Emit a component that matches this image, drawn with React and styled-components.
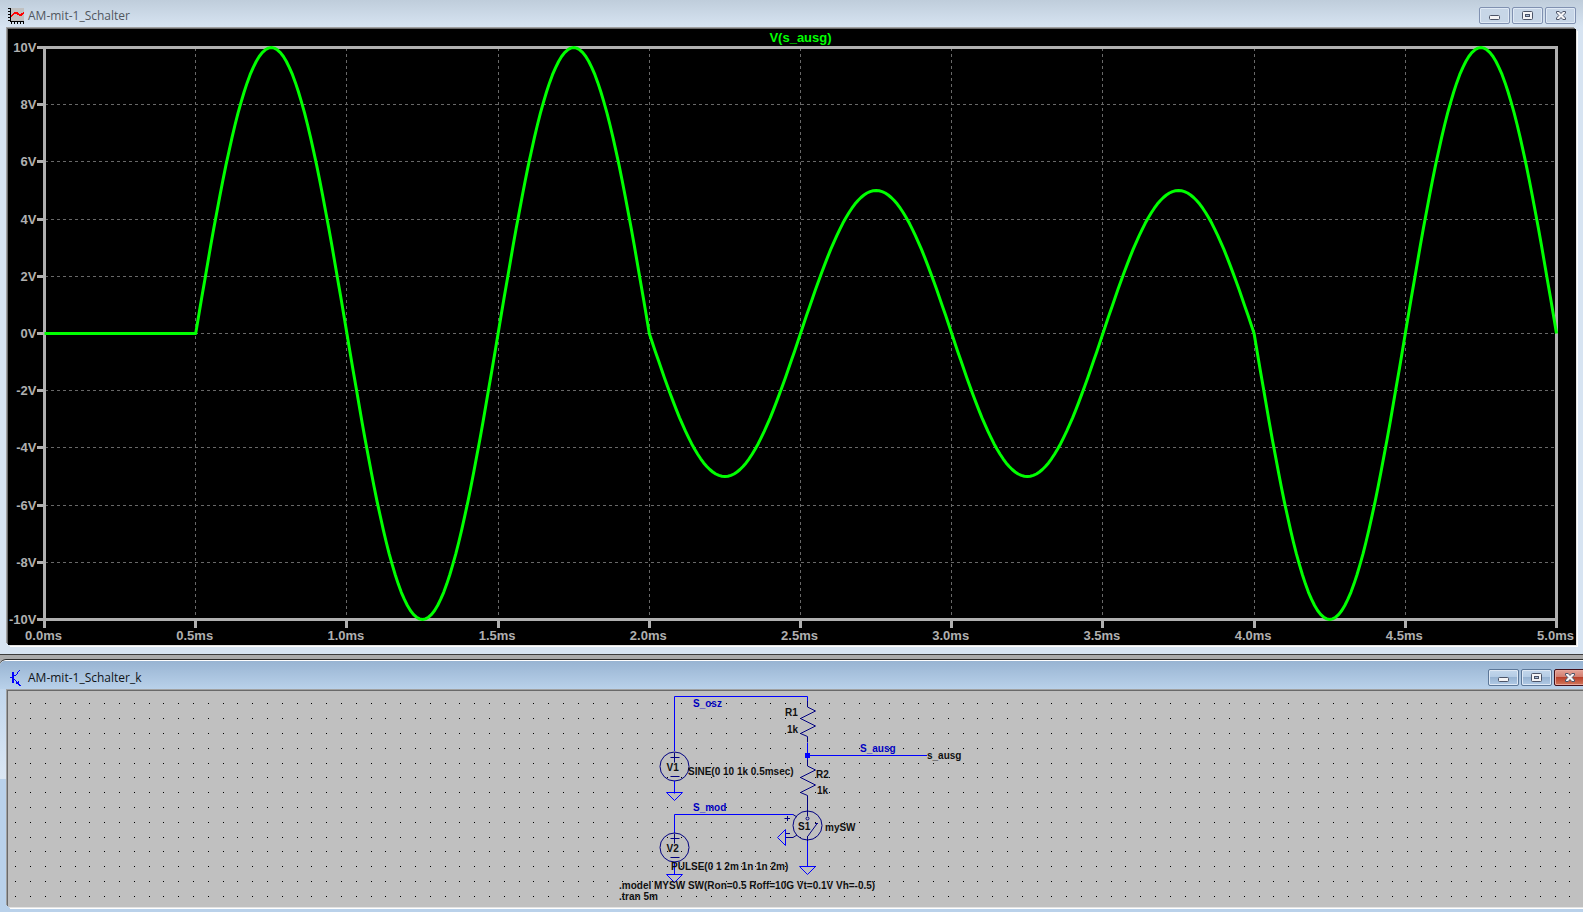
import React, { useLayoutEffect, useRef, useState } from "react";
import styled, { createGlobalStyle } from "styled-components";

const GlobalStyle = createGlobalStyle`
  * {
    box-sizing: border-box;
  }
  body {
    margin: 0;
    background: #ababab;
  }
`;

// current size of an element, kept up to date when the window changes
const useSize = () => {
  const ref = useRef(null);
  const [size, setSize] = useState({ width: 0, height: 0 });
  useLayoutEffect(() => {
    const measure = () => {
      const box = ref.current.getBoundingClientRect();
      setSize({ width: Math.round(box.width), height: Math.round(box.height) });
    };
    measure();
    const observer = new ResizeObserver(measure);
    observer.observe(ref.current);
    return () => observer.disconnect();
  }, []);
  return [ref, size];
};

const range = (n) => Array.from({ length: n }, (_, i) => i);

const PlotIcon = () => (
  <svg width="16" height="16" viewBox="0 0 16 16" shapeRendering="crispEdges" aria-hidden="true">
    <rect x="2" width="14" height="14" fill="#c0c0c0" />
    <path d="M2.5 0V14M2 13.5H16M0 .5H2M0 3.5H2M0 6.5H2M0 9.5H2M0 12.5H2M3.5 14V16M6.5 14V16M9.5 14V16M12.5 14V16M15.5 14V16" stroke="#000" />
    <path d="M3 7h1v2h-1zM4 6h1v2h-1zM5 5h1v2h-1zM6 4h4v2h-4zM9 5h2v2h-2zM11 6h3v2h-3zM13 5h2v2h-2zM15 4h1v2h-1z" fill="#f00" />
  </svg>
);

const TransistorIcon = () => (
  <svg width="16" height="16" viewBox="0 0 16 16" shapeRendering="crispEdges" aria-hidden="true">
    <path d="M2 7.5H5M7 5.5H8M8 4.5H9M9 3.5H10M9 2.5H10M10 1.5H11M11 .5H12M7 10.5H8M8 11.5H9" stroke="#00f" />
    <path d="M4 2H6V13H4ZM6 5H7V6H6ZM6 9H7V10H6ZM8 12H10V11H11V14H12V15H13V16H11V15H10V14H8Z" fill="#00f" />
  </svg>
);

const MinimizeIcon = () => (
  <svg width="11" height="10" viewBox="0 0 11 10" aria-hidden="true">
    <rect x=".5" y="4.5" width="10" height="4" rx="1" fill="#f4f4f6" stroke="#4c5468" />
  </svg>
);

const MaximizeIcon = () => (
  <svg width="11" height="10" viewBox="0 0 11 10" aria-hidden="true">
    <rect x=".5" y=".5" width="10" height="8" rx="1" fill="#f4f4f6" stroke="#4c5468" />
    <rect x="3.5" y="3.5" width="4" height="2" fill="#a9bdd8" stroke="#4c5468" />
  </svg>
);

const CloseIcon = () => (
  <svg width="12" height="10" viewBox="0 0 12 10" aria-hidden="true">
    <path d="M1.5.5H4.2L6 2.5 7.8.5H10.5V2L8.2 4.5 10.5 7V8.5H7.8L6 6.5 4.2 8.5H1.5V7L3.8 4.5 1.5 2Z" fill="#f6f6f8" stroke="#4c5468" />
  </svg>
);

const TitleBar = ({ icon, title, active }) => (
  <Bar $active={active}>
    {icon}
    <Title $active={active}>{title}</Title>
    <Controls>
      <ControlButton type="button" aria-label="Minimize" $active={active}>
        <MinimizeIcon />
      </ControlButton>
      <ControlButton type="button" aria-label="Maximize" $active={active}>
        <MaximizeIcon />
      </ControlButton>
      <ControlButton type="button" aria-label="Close" $active={active} $close={active}>
        <CloseIcon />
      </ControlButton>
    </Controls>
  </Bar>
);

// 1 kHz sine, delayed by 0.5 ms and halved while the switch is closed
const output = (t) => {
  if (t < 0.5) return 0;
  const amplitude = t > 2 && t < 4 ? 5 : 10;
  return amplitude * Math.sin(2 * Math.PI * (t - 0.5));
};

const WaveformPlot = () => {
  const [ref, { width, height }] = useSize();
  const left = 36.5;
  const top = 18.5;
  const right = width - 19.5;
  const bottom = height - 25.5;
  const x = (t) => left + ((right - left) * t) / 5;
  const y = (v) => top + ((bottom - top) * (10 - v)) / 20;
  const snap = (n) => Math.floor(n) + 0.5;
  const times = range(11).map((i) => i / 2);
  const volts = range(11).map((i) => 10 - i * 2);
  const trace = range(501)
    .map((i) => `${x(i / 100).toFixed(1)},${y(output(i / 100)).toFixed(1)}`)
    .join(" ");

  return (
    <PlotArea ref={ref}>
      {width > 0 && (
        <svg width={width} height={height} role="img" aria-label="V(s_ausg)">
          <PlotText x={x(2.5)} y="13" textAnchor="middle" fill="#00ff00">
            V(s_ausg)
          </PlotText>
          <g stroke="#686868" strokeDasharray="3 3" shapeRendering="crispEdges">
            {times.slice(1, -1).map((t) => (
              <line key={t} x1={snap(x(t))} x2={snap(x(t))} y1={top} y2={bottom} />
            ))}
            {volts.slice(1, -1).map((v) => (
              <line key={v} x1={left} x2={right} y1={snap(y(v))} y2={snap(y(v))} />
            ))}
          </g>
          <g stroke="#b0b0b0" strokeWidth="3" fill="none" shapeRendering="crispEdges">
            <rect x={left} y={top} width={right - left} height={bottom - top} />
            {times.map((t) => (
              <line key={t} x1={snap(x(t))} x2={snap(x(t))} y1={bottom} y2={bottom + 8} />
            ))}
            {volts.map((v) => (
              <line key={v} x1={left - 8} x2={left} y1={snap(y(v))} y2={snap(y(v))} />
            ))}
          </g>
          {volts.map((v) => (
            <PlotText key={v} x={left - 8} y={snap(y(v)) + 4} textAnchor="end">
              {v}V
            </PlotText>
          ))}
          {times.map((t) => (
            <PlotText key={t} x={x(t) - 1} y={bottom + 20} textAnchor="middle">
              {t.toFixed(1)}ms
            </PlotText>
          ))}
          <polyline points={trace} fill="none" stroke="#00ff00" strokeWidth="3" strokeLinejoin="round" />
        </svg>
      )}
    </PlotArea>
  );
};

const Source = ({ x, y, name }) => (
  <g transform={`translate(${x} ${y})`}>
    <circle r="14.5" />
    <path d="M-4-9H5M0-14V-4M-4 10H5" />
    <path d="M0 14V27" stroke="#0000ff" />
    <Label x="-8" y="4">{name}</Label>
  </g>
);

const Resistor = ({ x, y }) => (
  <path d={`M${x} ${y - 6}v6l8 4l-15 7.5l15 7.5l-15 7.5l7 3v6`} />
);

const Ground = ({ x, y, turn = 0 }) => (
  <path transform={`translate(${x} ${y}) rotate(${turn})`} d="M-8 0H8L0 8Z" stroke="#0000ff" />
);

const DRAWING_WIDTH = 1584;

const Schematic = () => {
  const [ref, { width, height }] = useSize();
  const shift = Math.round((width - DRAWING_WIDTH) / 2);
  const step = 14.8;
  const columns = Math.max(0, Math.floor((width - 7) / step) + 1);
  const rows = Math.max(0, Math.floor((height - 12) / step) + 1);
  const dots = range(rows)
    .map((r) =>
      range(columns)
        .map((c) => `M${Math.round(7.4 + c * step)} ${Math.round(12.4 + r * step)}h1v1h-1z`)
        .join("")
    )
    .join("");

  return (
    <SchematicArea ref={ref}>
      {width > 0 && (
        <svg width={width} height={height} role="img" aria-label="Schematic">
          <path d={dots} fill="#000" shapeRendering="crispEdges" />
          <g transform={`translate(${shift} 0)`} fill="none" stroke="#000080">
            <path
              d="M666.5 60V5.5H799.5V10M799.5 52V69M799.5 64.5H919M666.5 142V123.5H785M799.5 150V175"
              stroke="#0000ff"
            />
            <rect x="797" y="62" width="5" height="5" fill="#0000ff" stroke="none" />
            <Source x={666.5} y={75.5} name="V1" />
            <Ground x={666.5} y={101.5} />
            <Source x={666.5} y={156.5} name="V2" />
            <Ground x={666.5} y={183.5} />
            <Resistor x={799.5} y={16} />
            <Resistor x={799.5} y={75} />
            <path d="M799.5 105V125M799.5 145V150" />
            <circle cx="799.5" cy="134.5" r="14.5" />
            <circle cx="799.5" cy="127.5" r="1.5" />
            <path d="M809.5 132L800 145M807 132.5H810M776.5 127.5H782M779.5 125V130M777.5 142.5H782M785 123.5L789 126M777.5 146.5H785L789 144" />
            <Ground x={777.5} y={146.5} turn={90} />
            <Ground x={799.5} y={175.5} />
            <NetLabel x="685" y="16">S_osz</NetLabel>
            <NetLabel x="852" y="61">S_ausg</NetLabel>
            <NetLabel x="685" y="120">S_mod</NetLabel>
            <Label x="777" y="25">R1</Label>
            <Label x="779" y="42">1k</Label>
            <Label x="808" y="87">R2</Label>
            <Label x="809" y="103">1k</Label>
            <Label x="919" y="68">s_ausg</Label>
            <Label x="680" y="84">SINE(0 10 1k 0.5msec)</Label>
            <Label x="790" y="139">S1</Label>
            <Label x="817" y="140">mySW</Label>
            <Label x="663" y="179">PULSE(0 1 2m 1n 1n 2m)</Label>
            <Label x="611" y="198">.model MYSW SW(Ron=0.5 Roff=10G Vt=0.1V Vh=-0.5)</Label>
            <Label x="611" y="209">.tran 5m</Label>
          </g>
        </svg>
      )}
    </SchematicArea>
  );
};

const App = () => {
  return (
    <Workspace>
      <GlobalStyle />
      <PlotWindow>
        <TitleBar icon={<PlotIcon />} title="AM-mit-1_Schalter" />
        <WaveformPlot />
      </PlotWindow>
      <SchematicWindow>
        <TitleBar icon={<TransistorIcon />} title="AM-mit-1_Schalter_k" active />
        <Schematic />
      </SchematicWindow>
    </Workspace>
  );
};

const Workspace = styled.main`
  display: flex;
  flex-direction: column;
  gap: 5px;
  height: 100vh;
  overflow: hidden;
  background: #ababab;
`;

const Window = styled.section`
  display: flex;
  flex-direction: column;
  min-height: 0;
`;

const PlotWindow = styled(Window)`
  flex: 647 1 0;
  padding: 0 5px 7px 6px;
  background: #d7e4f2;
  border-bottom: 1px solid #3c3c3c;
`;

/* runs a little past the right edge of the workspace */
const SchematicWindow = styled(Window)`
  flex: 248 1 0;
  margin-right: -9px;
  padding: 0 0 3px 6px;
  background: linear-gradient(#b9d1ea, #dbe7f4) 0 0 / 6px 118px no-repeat, #b9d1ea;
  border-top: 1px solid #ffffff;
  border-top-left-radius: 6px;
  box-shadow: 0 -1px 0 #2c2c2c;
`;

const Bar = styled.header`
  display: flex;
  flex: none;
  align-items: center;
  height: ${({ $active }) => ($active ? "28px" : "27px")};
  margin: 0 -5px 0 -6px;
  padding: ${({ $active }) => ($active ? "5px 12px 0 8px" : "4px 7px 0 8px")};
  border-top-left-radius: ${({ $active }) => ($active ? "5px" : "0")};
  background: ${({ $active }) =>
    $active
      ? "linear-gradient(#98b4d2, #b9d1ea)"
      : "linear-gradient(#bfcddb, #d7e4f2)"};
`;

const Title = styled.h1`
  flex: 1;
  margin: 0 0 0 4px;
  font: 400 12px/16px "Open Sans", "Noto Sans", sans-serif;
  color: ${({ $active }) => ($active ? "#101418" : "#50565e")};
`;

const Controls = styled.div`
  display: flex;
  gap: 2px;
`;

const ControlButton = styled.button`
  display: flex;
  align-items: center;
  justify-content: center;
  width: 31px;
  height: 17px;
  padding: 0;
  border: 1px solid ${({ $active, $close }) => ($close ? "#43101a" : $active ? "#5c7798" : "#8091b1")};
  border-radius: 2px;
  box-shadow: inset 0 0 0 1px ${({ $close }) => ($close ? "#e9a79b" : "#dfe9f5")};
  background: ${({ $active, $close }) =>
    $close
      ? "linear-gradient(#e3a297 0, #d07a6b 50%, #b8402b 50%, #d2785c)"
      : $active
      ? "linear-gradient(#c3d7ec 0, #b3cbe4 50%, #97b3d2 50%, #b2cbe6)"
      : "#c7d6e7"};
`;

/* sunken two-step edge: dark above and left, light below and right */
const PlotArea = styled.div`
  flex: 1;
  min-height: 0;
  margin: 2px;
  overflow: hidden;
  background: #000000;
  box-shadow: -1px -1px 0 #696969, 1px 1px 0 #e3e3e3, -2px -2px 0 #a0a0a0,
    2px 2px 0 #ffffff;

  svg {
    display: block;
  }
`;

const SchematicArea = styled(PlotArea)`
  margin-right: 0;
  background: #c0c0c0;
`;

const PlotText = styled.text.attrs(({ fill }) => ({ fill: fill || "#b0b0b0" }))`
  font: 700 13px "Liberation Sans", Arial, sans-serif;
`;

const Label = styled.text`
  font: 700 10px "Liberation Sans", Arial, sans-serif;
  fill: #101010;
  stroke: none;
`;

const NetLabel = styled(Label)`
  fill: #0000c0;
`;

export default App;
